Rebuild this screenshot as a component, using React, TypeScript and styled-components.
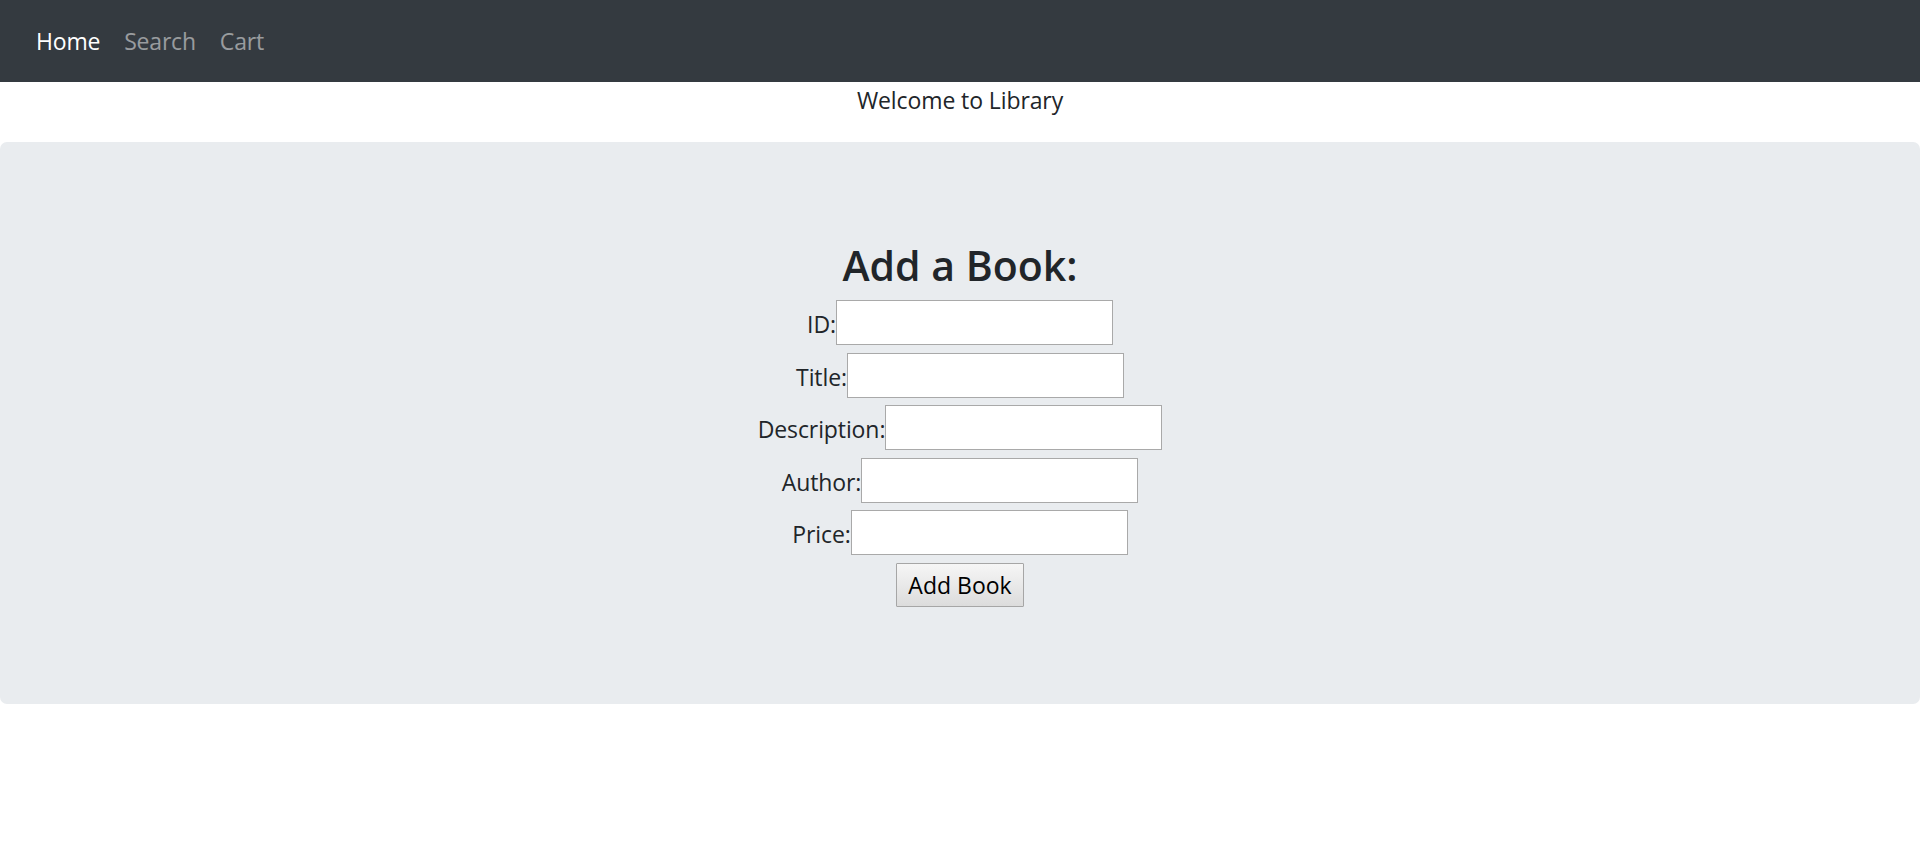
import React from "react";
import styled, { createGlobalStyle } from "styled-components";

const GlobalStyle = createGlobalStyle`
  html, body {
    margin: 0;
    padding: 0;
    background: #fff;
  }
  body {
    font-family: "Open Sans", "Noto Sans", "Liberation Sans", sans-serif;
    font-size: 24px;
    line-height: 1.5;
    color: #212529;
  }
  * { box-sizing: border-box; }
`;

const NavBar = styled.nav`
  height: 82px;
  background: #343a40;
  display: flex;
  align-items: center;
  padding: 0 24px;
`;

const NavLink = styled.a<{ $active?: boolean }>`
  font-size: 23px;
  line-height: 36px;
  padding: 0 12px;
  text-decoration: none;
  letter-spacing: -0.2px;
  color: ${(p) => (p.$active ? "#ffffff" : "rgba(255,255,255,0.5)")};
  cursor: pointer;
`;

const Welcome = styled.p`
  margin: 0 0 24px;
  padding-top: 1px;
  text-align: center;
  font-size: 23px;
  line-height: 35px;
  letter-spacing: -0.1px;
`;

const Jumbotron = styled.section`
  background: #e9ecef;
  border-radius: 7px;
  padding: 96px 48px 96px;
  margin-bottom: 48px;
`;

const Heading = styled.h2`
  margin: 0 0 8px;
  text-align: center;
  font-size: 41px;
  font-weight: 600;
  line-height: 54px;
  color: #212529;
`;

const Form = styled.form`
  display: flex;
  flex-direction: column;
  align-items: center;
  gap: 7.5px;
`;

const Row = styled.div`
  display: flex;
  align-items: center;
  justify-content: center;
  height: 45px;
`;

const Label = styled.label`
  font-size: 23px;
  line-height: 36px;
  padding-top: 3px;
  letter-spacing: -0.1px;
  color: #212529;
`;

const Input = styled.input`
  width: 277px;
  height: 45px;
  border: 1px solid #a9a9a9;
  background: #fff;
  padding: 2px 4px;
  font-size: 20px;
  outline: none;
`;

const Button = styled.button`
  width: 128px;
  height: 44px;
  border: 1px solid #a6a6a6;
  border-radius: 1px;
  background: linear-gradient(#f6f6f6, #dcdcdc);
  font-family: "Open Sans", "Noto Sans", sans-serif;
  font-size: 23px;
  color: #000;
  padding: 0;
  cursor: pointer;
`;

const fields = ["ID", "Title", "Description", "Author", "Price"];

export default function App() {
  return (
    <>
      <GlobalStyle />
      <NavBar>
        <NavLink $active>Home</NavLink>
        <NavLink>Search</NavLink>
        <NavLink>Cart</NavLink>
      </NavBar>
      <Welcome>Welcome to Library</Welcome>
      <Jumbotron>
        <Heading>Add a Book:</Heading>
        <Form onSubmit={(e) => e.preventDefault()}>
          {fields.map((f) => (
            <Row key={f}>
              <Label htmlFor={f}>{f}:</Label>
              <Input id={f} type="text" />
            </Row>
          ))}
          <Row>
            <Button type="submit">Add Book</Button>
          </Row>
        </Form>
      </Jumbotron>
    </>
  );
}
